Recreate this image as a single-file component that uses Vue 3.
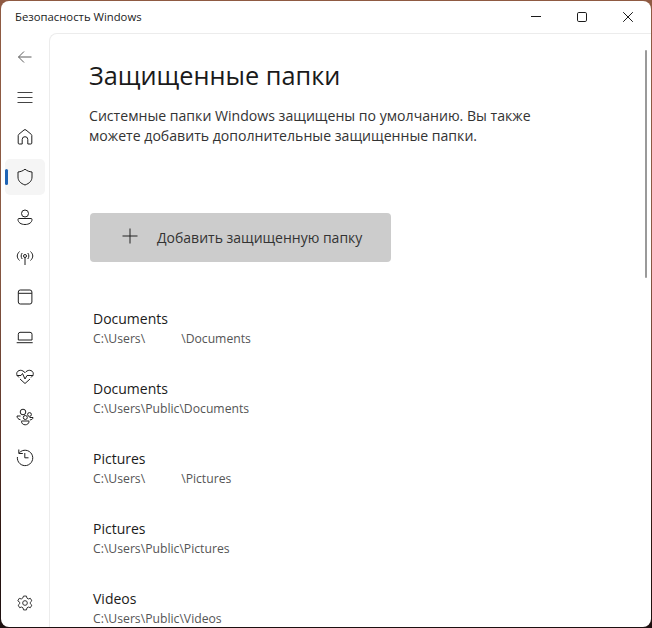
<script setup>
const folders = [
  { name: 'Documents', path: 'C:\\Users\\', tail: '\\Documents' },
  { name: 'Documents', path: 'C:\\Users\\Public\\Documents' },
  { name: 'Pictures', path: 'C:\\Users\\', tail: '\\Pictures' },
  { name: 'Pictures', path: 'C:\\Users\\Public\\Pictures' },
  { name: 'Videos', path: 'C:\\Users\\Public\\Videos' },
]
const navIcons = [
  { id: 'home', d: 'M3.200 16V8.500a1.500 1.500 0 0 1 .6-1.200L9 3a1.600 1.600 0 0 1 2 0l5.200 4.300a1.500 1.500 0 0 1 .6 1.200V16a1 1 0 0 1-1 1h-3v-4.500a2.800 2.800 0 0 0-5.600 0V17h-3a1 1 0 0 1-1-1z' },
  { id: 'shield', active: true, d: 'M10 2.200c2.100 1.700 4.300 2.500 7 2.800v5c0 3.800-2.400 6.300-7 8-4.600-1.700-7-4.200-7-8V5c2.700-.3 4.900-1.100 7-2.800z' },
  { id: 'person', d: 'M10 3a3.500 3.500 0 1 1 0 7 3.500 3.500 0 0 1 0-7zM4 11.500h12a1 1 0 0 1 1 1c0 3-3 5-7 5s-7-2-7-5a1 1 0 0 1 1-1z' },
  { id: 'wifi', d: 'M10 10.500V18M10 7.500a1.500 1.500 0 1 1 0 3 1.500 1.500 0 0 1 0-3zM7.200 6c-1.400 1.900-1.400 4.100 0 6M12.800 6c1.400 1.900 1.400 4.100 0 6M4.500 4.500c-3 3-3 6 0 9M15.500 4.500c3 3 3 6 0 9' },
  { id: 'window', d: 'M5.300 3h9.600a2 2 0 0 1 2 2v10a2 2 0 0 1-2 2H5.300a2 2 0 0 1-2-2V5a2 2 0 0 1 2-2zM3.300 6.300h13.600' },
  { id: 'laptop', d: 'M5 5.300h10a2 2 0 0 1 2 2V13H3.300V7.300a2 2 0 0 1 1.700-2zM1.700 15.700h16' },
  { id: 'health', d: 'M4 10.500C2 8.500 1.700 7.600 1.700 6.800 1.700 4.700 3.500 3.300 5.400 3.300c1.900 0 3.400 1 4.600 2.400 1.200-1.400 2.700-2.400 4.600-2.400 1.900 0 3.700 1.400 3.700 3.500 0 .8-.3 1.700-2.300 3.700M1.700 8.500H6l1.500-2 2.500 5.500 2-3.500h6.300M5 12l5 4.500 5-4.500' },
  { id: 'family', d: 'M8 2.200a2.800 2.800 0 1 1 0 5.600 2.800 2.800 0 0 1 0-5.600zM14.500 5.600a1.900 1.900 0 1 1 0 3.800 1.900 1.900 0 0 1 0-3.800zM10.300 8.500a2 2 0 1 1 0 4 2 2 0 0 1 0-4zM5.500 9H2c0 2 1.300 3.300 3.500 3.800M14.500 10.500H18c0 1.400-1.100 2.200-3.200 2.500M6.500 14h7.500v.5c0 2-1.800 3.300-3.800 3.300s-3.700-1.300-3.700-3.300z' },
  { id: 'history', d: 'M3.800 2.500v4h4M4.300 5.800A7.700 7.700 0 1 1 2.400 10M9.800 6v4.800h3.700' },
]
</script>

<template>
  <div class="desk">
    <div class="win">
      <header class="titlebar">
        <span class="wintitle">Безопасность Windows</span>
        <div class="controls">
          <span class="ctl"><svg width="10" height="10" viewBox="0 0 10 10"><path d="M0 4.500h10" stroke="#1b1b1b" fill="none"/></svg></span>
          <span class="ctl"><svg width="10" height="10" viewBox="0 0 10 10"><rect x=".5" y=".5" width="9" height="9" rx="1.300" stroke="#1b1b1b" fill="none"/></svg></span>
          <span class="ctl"><svg width="10" height="10" viewBox="0 0 10 10"><path d="M.2.2l9.600 9.600M9.800.2L.2 9.800" stroke="#1b1b1b" fill="none"/></svg></span>
        </div>
      </header>
      <div class="main">
        <nav class="side">
          <div class="top">
            <button class="nav back">
              <svg width="16" height="16" viewBox="0 0 16 16" fill="none" stroke="#5d5d5d" stroke-width="1"><path d="M1.500 8h13M7 2.500L1.500 8 7 13.500"/></svg>
            </button>
            <button class="nav menu">
              <svg width="16" height="14" viewBox="0 0 16 14" fill="none" stroke="#444" stroke-width="1"><path d="M.5 2.500h15M.5 7.500h15M.5 12.500h15"/></svg>
            </button>
            <button v-for="i in navIcons" :key="i.id" class="nav" :class="{ active: i.active }">
              <svg width="20" height="20" viewBox="0 0 20 20" fill="none" stroke="#1f1f1f" stroke-width="1"><path :d="i.d"/></svg>
            </button>
          </div>
          <button class="nav gear">
            <svg width="18" height="18" viewBox="0 0 20 20" fill="none" stroke="#333" stroke-width="1.100"><circle cx="10" cy="10" r="2.600"/><path d="M8.400 2.300h3.200l.6 2.300 1.500.9 2.300-.7 1.600 2.800-1.700 1.600v1.600l1.700 1.600-1.600 2.800-2.300-.7-1.500.9-.6 2.300H8.400l-.6-2.300-1.500-.9-2.300.7-1.600-2.800 1.700-1.600V9.200L2 7.600l1.600-2.800 2.300.7 1.500-.9z"/></svg>
          </button>
        </nav>
        <main class="content">
          <h1>Защищенные папки</h1>
          <p class="desc">Системные папки Windows защищены по умолчанию. Вы также можете добавить дополнительные защищенные папки.</p>
          <button class="add">
            <svg class="plus" width="16" height="16" viewBox="0 0 16 16" fill="none" stroke="#222" stroke-width="1"><path d="M8 .5v15M.5 8h15"/></svg>
            <span>Добавить защищенную папку</span>
          </button>
          <ul class="list">
            <li v-for="(f, n) in folders" :key="n">
              <div class="fname">{{ f.name }}</div>
              <div class="fpath">{{ f.path }}<span v-if="f.tail" class="redact"></span>{{ f.tail }}</div>
            </li>
          </ul>
          <div class="thumb"></div>
        </main>
      </div>
    </div>
  </div>
</template>

<style>
html, body { margin: 0; padding: 0; overflow: hidden; }
</style>

<style scoped>
.desk {
  width: 652px;
  height: 628px;
  box-sizing: border-box;
  padding: 1px;
  background: linear-gradient(180deg, #8f5a42 0%, #8a5a44 40%, #5a3328 70%, #2c1510 85%, #1d1010 100%);
  overflow: hidden;
}
.win {
  height: 100%;
  background: #fff;
  border-radius: 8px;
  overflow: hidden;
  display: flex;
  flex-direction: column;
  font-family: "Open Sans", "Noto Sans", sans-serif;
  color: #1b1b1b;
}
.titlebar {
  height: 32px;
  flex: none;
  display: flex;
  align-items: center;
  justify-content: space-between;
}
.wintitle { margin-left: 14px; font-size: 11.300px; margin-top: -1px; }
.controls { display: flex; }
.ctl { width: 46px; height: 32px; display: flex; align-items: center; justify-content: center; }
.main { flex: 1; display: flex; min-height: 0; }
.side {
  width: 48px;
  flex: none;
  display: flex;
  flex-direction: column;
  justify-content: space-between;
  padding-bottom: 4px;
}
.nav {
  display: flex;
  align-items: center;
  justify-content: center;
  width: 40px;
  height: 40px;
  margin-left: 4px;
  padding: 0;
  border: 0;
  background: none;
  border-radius: 5px;
  position: relative;
}
.top { display: flex; flex-direction: column; }
.back { height: 48px; }
.menu { height: 32px; margin-bottom: 4px; }
.active { background: #f5f5f5; height: 36px; margin-top: 2px; margin-bottom: 2px; }
.active::before {
  content: "";
  position: absolute;
  left: 0;
  top: 10px;
  width: 3px;
  height: 16px;
  border-radius: 2px;
  background: #1e63b4;
}
.content {
  flex: 1;
  position: relative;
  border-left: 1px solid #ececec;
  border-top: 1px solid #ececec;
  border-top-left-radius: 8px;
  padding: 23px 0 0 39px;
  overflow: hidden;
}
h1 { margin: 0; font-weight: 400; font-size: 25.300px; line-height: 36px; color: #1a1a1a; }
.desc { margin: 13px 0 0; width: 470px; font-size: 14.100px; line-height: 20px; color: #333; }
.add {
  margin-top: 67px;
  margin-left: 1px;
  width: 301px;
  height: 49px;
  display: flex;
  align-items: center;
  padding: 0 0 0 32px;
  gap: 19px;
  border: 0;
  border-radius: 4px;
  background: #cccccc;
  font-family: inherit;
  font-size: 14px;
  color: #333;
}
.plus { margin-top: -3px; }
.list { list-style: none; margin: 47px 0 0; padding: 0 0 0 4px; }
.list li { height: 70px; }
.fname { font-size: 14px; line-height: 19px; margin-bottom: 2px; color: #1b1b1b; }
.fpath { font-size: 12.200px; line-height: 18px; color: #555; }
.redact { display: inline-block; width: 36px; }
.thumb {
  position: absolute;
  right: 4px;
  top: 16px;
  width: 2px;
  height: 228px;
  background: #9a9a9a;
  border-radius: 1px;
}
</style>
